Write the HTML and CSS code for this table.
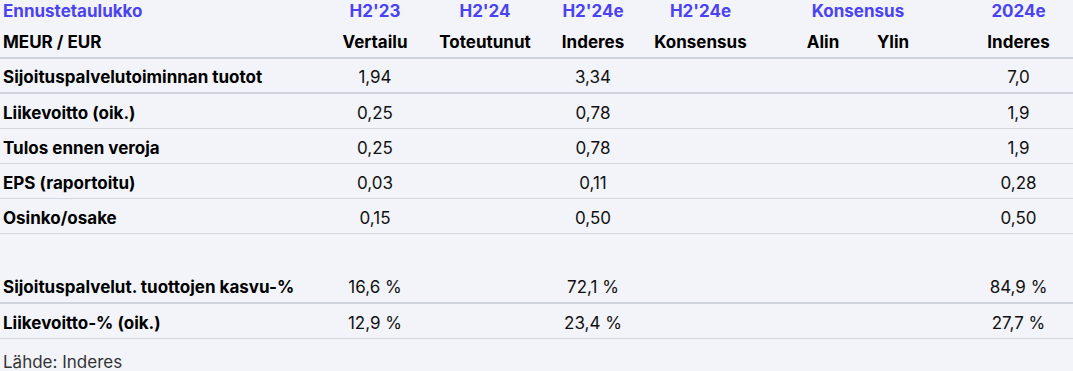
FILE: index.html
```html
<!DOCTYPE html>
<html lang="fi">
<head>
<meta charset="utf-8">
<link rel="stylesheet" href="styles.css">
</head>
<body>
<div class="table">
  <div class="row head1">
    <div class="c lab">Ennustetaulukko</div>
    <div class="c c1">H2'23</div>
    <div class="c">H2'24</div>
    <div class="c">H2'24e</div>
    <div class="c c4">H2'24e</div>
    <div class="c span2">Konsensus</div>
    <div class="c c7">2024e</div>
  </div>
  <div class="row head2 thick">
    <div class="c lab">MEUR / EUR</div>
    <div class="c c1">Vertailu</div>
    <div class="c">Toteutunut</div>
    <div class="c">Inderes</div>
    <div class="c c4">Konsensus</div>
    <div class="c">Alin</div>
    <div class="c">Ylin</div>
    <div class="c c7">Inderes</div>
  </div>
  <div class="row body thick">
    <div class="c lab">Sijoituspalvelutoiminnan tuotot</div>
    <div class="c c1">1,94</div><div class="c"></div><div class="c">3,34</div>
    <div class="c c4"></div><div class="c"></div><div class="c"></div>
    <div class="c c7">7,0</div>
  </div>
  <div class="row body">
    <div class="c lab">Liikevoitto (oik.)</div>
    <div class="c c1">0,25</div><div class="c"></div><div class="c">0,78</div>
    <div class="c c4"></div><div class="c"></div><div class="c"></div>
    <div class="c c7">1,9</div>
  </div>
  <div class="row body">
    <div class="c lab">Tulos ennen veroja</div>
    <div class="c c1">0,25</div><div class="c"></div><div class="c">0,78</div>
    <div class="c c4"></div><div class="c"></div><div class="c"></div>
    <div class="c c7">1,9</div>
  </div>
  <div class="row body">
    <div class="c lab">EPS (raportoitu)</div>
    <div class="c c1">0,03</div><div class="c"></div><div class="c">0,11</div>
    <div class="c c4"></div><div class="c"></div><div class="c"></div>
    <div class="c c7">0,28</div>
  </div>
  <div class="row body">
    <div class="c lab">Osinko/osake</div>
    <div class="c c1">0,15</div><div class="c"></div><div class="c">0,50</div>
    <div class="c c4"></div><div class="c"></div><div class="c"></div>
    <div class="c c7">0,50</div>
  </div>
  <div class="row body blank"></div>
  <div class="row body thick">
    <div class="c lab">Sijoituspalvelut. tuottojen kasvu-%</div>
    <div class="c c1">16,6 %</div><div class="c"></div><div class="c">72,1 %</div>
    <div class="c c4"></div><div class="c"></div><div class="c"></div>
    <div class="c c7">84,9 %</div>
  </div>
  <div class="row body">
    <div class="c lab">Liikevoitto-% (oik.)</div>
    <div class="c c1">12,9 %</div><div class="c"></div><div class="c">23,4 %</div>
    <div class="c c4"></div><div class="c"></div><div class="c"></div>
    <div class="c c7">27,7 %</div>
  </div>
  <div class="source">Lähde: Inderes</div>
</div>
</body>
</html>
```

FILE: styles.css
```css
html, body {
  margin: 0;
  padding: 0;
  background: #f3f4f9;
}
body {
  font-family: Inter, "Liberation Sans", sans-serif;
  font-size: 17px;
  color: #111;
  width: 1073px;
  height: 371px;
  overflow: hidden;
}
.row {
  display: grid;
  grid-template-columns: 305px 120px 120px 96px 147px 70px 70px 145px;
  align-items: center;
  box-sizing: border-box;
  border-bottom: 1px solid #d3d7df;
}
.c {
  text-align: center;
  white-space: nowrap;
}
.c.lab {
  text-align: left;
  padding-left: 3px;
}
.c1 {
  padding-left: 20px;
}
.c4 {
  padding-right: 28px;
}
.c7 {
  padding-left: 36px;
}
.span2 {
  grid-column: span 2;
}
.head1 {
  height: 23px;
  border-bottom: none;
  color: #4b42f2;
  font-weight: 700;
  align-items: start;
  line-height: 22px;
}
.head2 {
  height: 36px;
  padding-top: 3px;
  font-weight: 700;
  color: #000;
}
.thick {
  border-bottom: 2px solid #cfd3dc;
}
.body {
  height: 35px;
  padding-top: 3px;
  color: #111;
}
.body .lab {
  font-weight: 700;
  color: #000;
}
.blank {
  border-bottom: none;
}
.source {
  padding: 13px 0 0 3px;
  color: #333;
}
```
